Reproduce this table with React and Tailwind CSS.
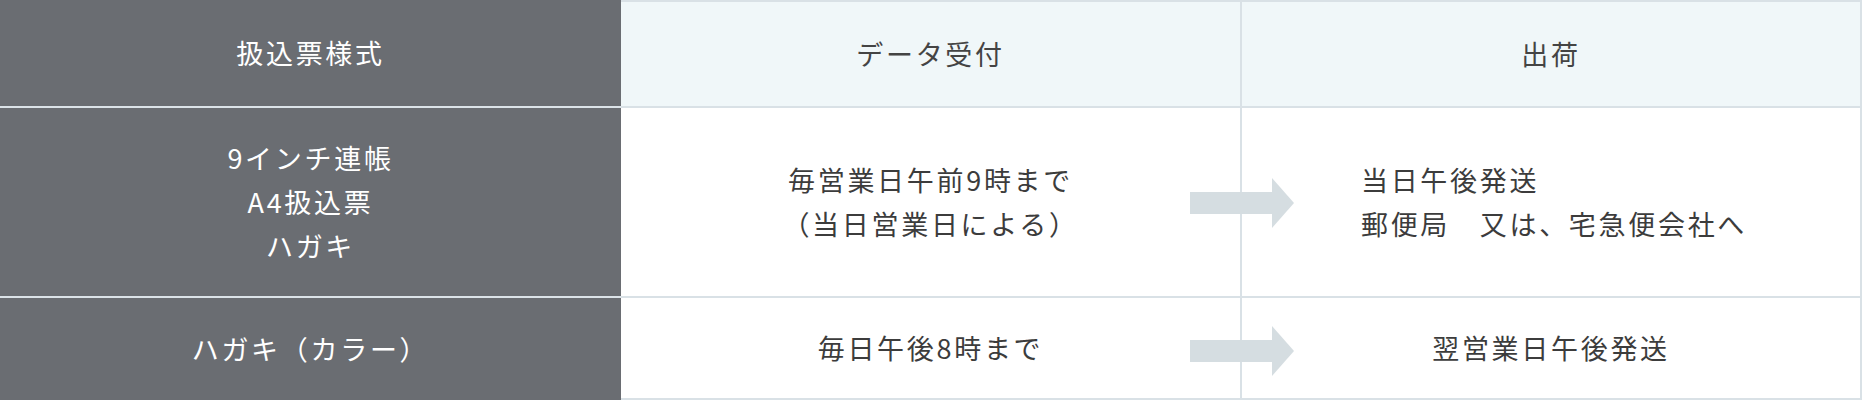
import React from "react";

const font = { fontFamily: '"Noto Sans CJK JP", "Noto Sans", sans-serif' };

function Arrow() {
  return (
    <svg width="104" height="50" viewBox="0 0 104 50" className="block">
      <rect x="0" y="14" width="83" height="22" fill="#d5dde1" />
      <polygon points="82,0 104,25 82,50" fill="#d5dde1" />
    </svg>
  );
}

export default function App() {
  const gray = "bg-[#6a6d72] text-white";
  const line = "border-[#d9e1e6]";
  const txt = "text-[27px] leading-[44px] tracking-[0.1em]";
  return (
    <div className="w-[1862px] bg-white" style={font}>
      {/* header */}
      <div className="flex h-[106px]">
        <div className={`w-[621px] ${gray} flex items-center justify-center ${txt}`}>
          扱込票様式
        </div>
        <div className={`w-[619px] border-t-2 ${line} bg-[#f0f7f9] text-[#444] flex items-center justify-center ${txt}`}>
          データ受付
        </div>
        <div className={`flex-1 border-t-2 border-l-2 border-r-2 ${line} bg-[#f0f7f9] text-[#444] flex items-center justify-center ${txt}`}>
          出荷
        </div>
      </div>
      {/* row 1 */}
      <div className="relative flex h-[190px]">
        <div className={`w-[621px] border-t-2 border-[#dce3e8] ${gray} flex flex-col items-center justify-center text-center ${txt}`}>
          <span>9インチ連帳</span>
          <span>A4扱込票</span>
          <span>ハガキ</span>
        </div>
        <div className={`w-[619px] border-t-2 ${line} text-[#3c3c3c] flex flex-col items-center justify-center text-center ${txt}`}>
          <span>毎営業日午前9時まで</span>
          <span>（当日営業日による）</span>
        </div>
        <div className={`flex-1 border-t-2 border-l-2 border-r-2 ${line} text-[#3c3c3c] flex items-center justify-center ${txt}`}>
          <div className="flex flex-col text-left pl-[6px]">
            <span>当日午後発送</span>
            <span>郵便局　又は、宅急便会社へ</span>
          </div>
        </div>
        <div className="absolute left-[1190px] top-[72px]">
          <Arrow />
        </div>
      </div>
      {/* row 2 */}
      <div className="relative flex h-[104px]">
        <div className={`w-[621px] border-t-2 border-[#dce3e8] ${gray} flex items-center justify-center ${txt}`}>
          ハガキ（カラー）
        </div>
        <div className={`w-[619px] border-t-2 border-b-2 ${line} text-[#3c3c3c] flex items-center justify-center ${txt}`}>
          毎日午後8時まで
        </div>
        <div className={`flex-1 border-t-2 border-b-2 border-l-2 border-r-2 ${line} text-[#3c3c3c] flex items-center justify-center ${txt}`}>
          翌営業日午後発送
        </div>
        <div className="absolute left-[1190px] top-[30px]">
          <Arrow />
        </div>
      </div>
    </div>
  );
}
